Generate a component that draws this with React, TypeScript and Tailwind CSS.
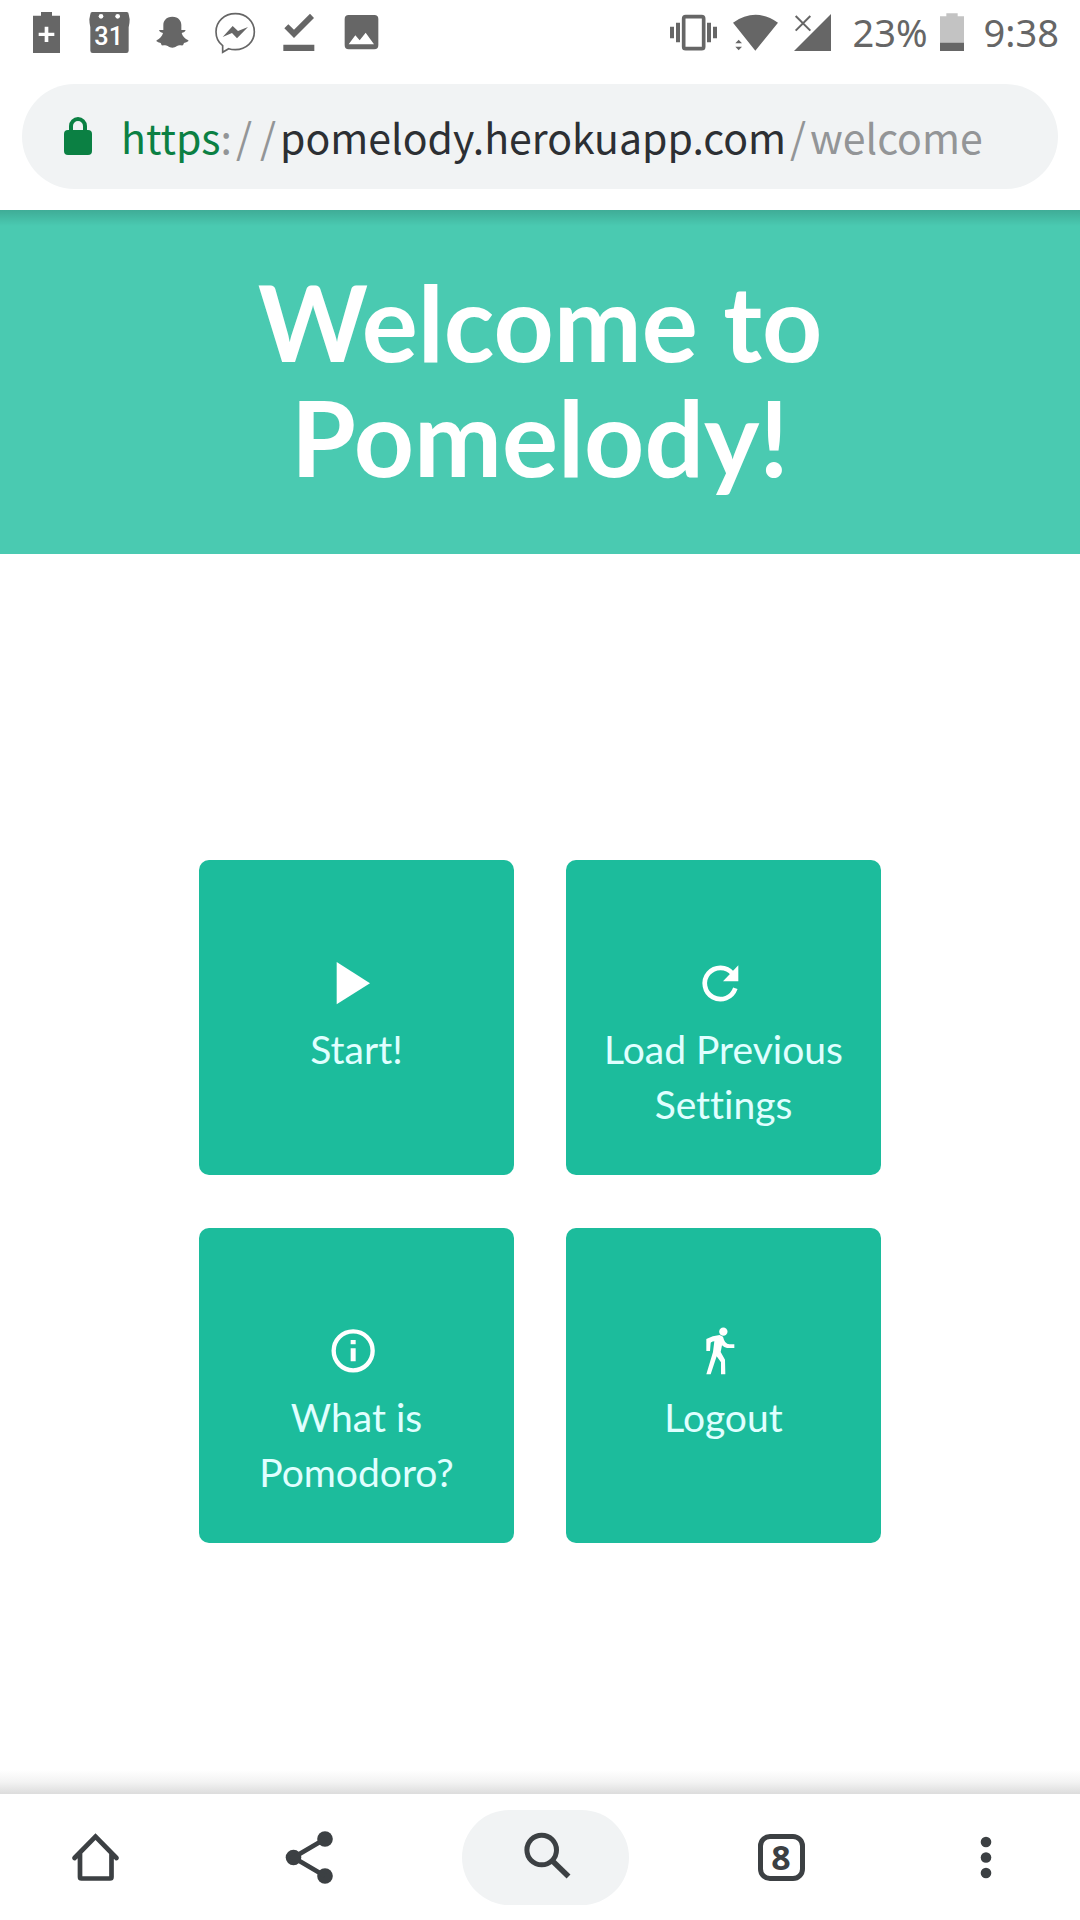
import React from "react";

type IconProps = { children: React.ReactNode; box: string; className: string };

function Icon({ children, box, className }: IconProps) {
  return (
    <svg viewBox={box} className={className} fill="currentColor" aria-hidden="true">
      {children}
    </svg>
  );
}

function StatusBar() {
  return (
    <div className="flex h-16 items-center justify-between pl-[25px] pr-[21px] text-[#666666]">
      <div className="flex items-center gap-5">
        <Icon box="75 30 129 129" className="h-[43px] w-[43px]">
          <path fillRule="evenodd" d="M123 33h33v11h24v112h-81V44h24zM134 77v18h-18v10h18v18h11v-18h18v-10h-18V77z" />
        </Icon>
        <Icon box="264 30 129 129" className="h-[43px] w-[43px]">
          <path d="M277 33h103q6 0 6 7l3 15q0 12-3 24v70q0 7-7 7H278q-7 0-7-7V79q-3-12-3-24l3-15q0-7 6-7z" />
          <circle cx="303" cy="46" r="7" fill="#fff" />
          <circle cx="353" cy="46" r="7" fill="#fff" />
          <text x="326" y="132" textAnchor="middle" fontSize="76" fontWeight="500" fontFamily="Roboto, sans-serif" fill="#fff">
            31
          </text>
        </Icon>
        <Icon box="453 30 129 129" className="h-[43px] w-[43px]">
          <path d="M517 47c-19 0-27 13-27 25v15c-4 1-9-1-12 0-3 3 6 8 11 9-2 10-10 17-19 22-3 4 6 6 12 8l3 7c6 1 12-2 18 2 5 3 9 5 14 5s9-2 14-5c6-4 12-1 18-2l3-7c6-2 15-4 13-8-10-5-18-12-20-22 5-1 14-6 11-9-3-1-8 1-12 0V72c0-12-8-25-27-25z" />
        </Icon>
        <Icon box="642 30 129 129" className="h-[43px] w-[43px]">
          <path
            d="M706 38c-33 0-58 24-58 54 0 18 7 32 20 42v20l18-11c6 2 13 3 20 3 33 0 57-24 57-54s-24-54-57-54z"
            fill="none"
            stroke="currentColor"
            strokeWidth="5"
          />
          <path d="M668 108l30-33 16 15 30-12-33 34-15-16z" />
        </Icon>
        <Icon box="831 30 129 129" className="h-[43px] w-[43px]">
          <path d="M850 131h93v19h-93zM853 82l12-12 17 16 48-48 12 13-60 60z" />
        </Icon>
        <Icon box="1020 30 129 129" className="h-[43px] w-[43px]">
          <path fillRule="evenodd" d="M1046 42h77q12 0 12 12v78q0 13-12 13h-77q-12 0-12-13V54q0-12 12-12zM1046 130h76l-25-35-18 23-13-15z" />
        </Icon>
      </div>
      <div className="flex items-center font-['Noto_Sans',sans-serif] text-[38px] leading-[52px]">
        <Icon box="87 30 141 129" className="mr-4 h-[43px] w-[47px]">
          <path d="M87 77h12v35H87zM105 65h12v59h-12zM198 65h12v59h-12zM216 77h12v35h-12z" />
          <rect x="128" y="47" width="60" height="96" rx="6" fill="none" stroke="currentColor" strokeWidth="11" />
        </Icon>
        <Icon box="273 30 135 129" className="mr-4 h-[43px] w-[45px]">
          <path d="M273 65q68-47 135 0l-68 84zM280 127l10-11 10 11zM280 137h20l-10 11z" />
        </Icon>
        <Icon box="457 30 111 129" className="mr-[22px] h-[43px] w-[37px]">
          <path d="M568 39v111H457z" />
          <path d="M462 45l44 44M506 45l-44 44" stroke="currentColor" strokeWidth="6" />
        </Icon>
        <span>23%</span>
        <Icon box="898 30 72 129" className="ml-3 mr-5 h-[43px] w-6">
          <path d="M917 37h34v9h19v79h-72V46h19z" fill="#c3c3c3" />
          <path d="M898 125h72v25h-72z" />
        </Icon>
        <span>9:38</span>
      </div>
    </div>
  );
}

function Slash() {
  return <span className="px-1">/</span>;
}

function AddressBar() {
  return (
    <div className="px-[22px] pb-[21px] pt-5">
      <button
        type="button"
        className="flex h-[105px] w-full items-center rounded-full bg-[#f1f3f4] pb-0.5 pl-[42px] text-left font-['Noto_Sans_CJK_SC',sans-serif] text-[41px] leading-[60px]"
      >
        <Icon box="0 0 28 38" className="mr-[29px] h-[38px] w-7 text-[#0b8043]">
          <rect x="0" y="13" width="28" height="25" rx="4" />
          <path d="M7 14V9a7 7 0 0 1 14 0v5" fill="none" stroke="currentColor" strokeWidth="4" />
        </Icon>
        <span className="whitespace-nowrap text-[#939597]">
          <span className="text-[#0b8043]">https</span>:<Slash />
          <Slash />
          <span className="text-[#2c2f33]">pomelody.herokuapp.com</span>
          <Slash />
          welcome
        </span>
      </button>
    </div>
  );
}

type TileProps = { label: string; box: string; children: React.ReactNode };

function Tile({ label, box, children }: TileProps) {
  return (
    <button
      type="button"
      className="flex aspect-square flex-col items-center rounded-[10px] bg-[#1cbc9c] px-8 pt-[97px] text-[39px] leading-[55px] text-[#e0ffff] [font-variant-ligatures:none]"
    >
      <Icon box={box} className="mb-[13px] mr-2 h-[52px] w-[52px] shrink-0 text-white">
        {children}
      </Icon>
      <span>{label}</span>
    </button>
  );
}

function BottomBar() {
  return (
    <nav className="mt-auto">
      <div className="h-6 bg-linear-to-t from-[#dcdcdc] via-[#f3f3f3] to-white" />
      <div className="grid h-[126px] grid-cols-[191fr_237fr_234fr_238fr_172fr] items-center justify-items-center pr-2 text-[#3c4043]">
        <button type="button" aria-label="Home" className="p-4">
          <Icon box="68 1830 55 55" className="h-[55px] w-[55px]">
            <path
              d="M74.5 1858L95.5 1836.500L116.500 1858M80 1853V1877a1.500 1.500 0 0 0 1.500 1.500H110a1.500 1.500 0 0 0 1.500-1.500V1853"
              fill="none"
              stroke="currentColor"
              strokeWidth="4.700"
              strokeLinecap="round"
            />
          </Icon>
        </button>
        <button type="button" aria-label="Share" className="p-4">
          <Icon box="282 1830 55 55" className="h-[55px] w-[55px]">
            <circle cx="325" cy="1839" r="7.800" />
            <circle cx="293.500" cy="1857.500" r="7.800" />
            <circle cx="325" cy="1876" r="7.800" />
            <path d="M325 1839L293.500 1857.500L325 1876" fill="none" stroke="currentColor" strokeWidth="4.700" />
          </Icon>
        </button>
        <button
          type="button"
          aria-label="Search"
          className="flex h-[95px] w-[167px] items-center justify-center rounded-full bg-[#f1f3f4]"
        >
          <Icon box="518 1830 55 55" className="h-[55px] w-[55px]">
            <circle cx="541.700" cy="1850" r="14.800" fill="none" stroke="currentColor" strokeWidth="5" />
            <path d="M552 1860.500L568.500 1876.500" stroke="currentColor" strokeWidth="5.500" />
          </Icon>
        </button>
        <button type="button" aria-label="Open tabs" className="p-4">
          <span className="flex h-[47px] w-[47px] items-center justify-center rounded-xl border-5 border-current font-['Noto_Sans',sans-serif] text-[34px] font-bold leading-none">
            8
          </span>
        </button>
        <button type="button" aria-label="More options" className="p-4">
          <Icon box="0 0 12 55" className="h-[55px] w-3">
            <circle cx="6" cy="12" r="5.300" />
            <circle cx="6" cy="27.500" r="5.300" />
            <circle cx="6" cy="43" r="5.300" />
          </Icon>
        </button>
      </div>
    </nav>
  );
}

export default function App() {
  return (
    <div className="flex min-h-screen flex-col bg-white font-[Lato,sans-serif]">
      <StatusBar />
      <AddressBar />
      <header className="bg-[#4acab1] text-white">
        <div className="h-4 bg-linear-to-b from-black/15 to-transparent" />
        <h1 className="mx-auto max-w-[700px] pb-[60px] pt-[38px] text-center text-[105px] font-bold leading-[115px]">
          Welcome to Pomelody!
        </h1>
      </header>
      <main className="mx-auto grid w-full max-w-[682px] grid-cols-2 gap-x-[52px] gap-y-[53px] pb-10 pt-[306px]">
        <Tile label="Start!" box="442 350 156 156">
          <path d="M471 365l100 64-100 63z" />
        </Tile>
        <Tile label="Load Previous Settings" box="434 350 156 156">
          <path d="M550 400A47 47 0 1 0 558 444" fill="none" stroke="currentColor" strokeWidth="14" />
          <path d="M567 375v48h-46z" />
        </Tile>
        <Tile label="What is Pomodoro?" box="442 344 156 156">
          <circle cx="520.500" cy="421.500" r="58.500" fill="none" stroke="currentColor" strokeWidth="13" />
          <path d="M513 389h15v13h-15zM513 414h15v39h-15z" />
        </Tile>
        <Tile label="Logout" box="434 344 156 156">
          <circle cx="522" cy="364" r="12.500" />
          <path d="M471 386Q490 376 511 374L521 379Q526 401 540 402H555V413H533Q524 412 518 405L514 425L527 448L528 492H515L515 456L502 438L484 492H471L491 425L495 393Q484 394 484 399L482 422H471Z" />
        </Tile>
      </main>
      <BottomBar />
    </div>
  );
}
